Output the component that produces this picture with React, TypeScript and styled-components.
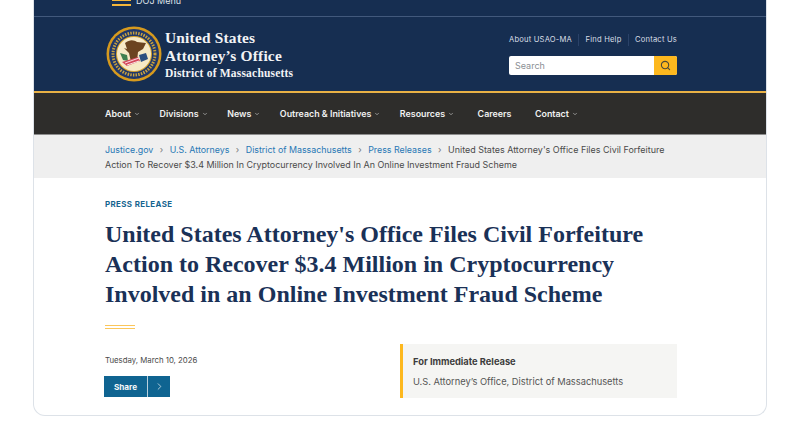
import styled, { createGlobalStyle } from "styled-components";
import { ChevronDown, ChevronRight, Search } from "lucide-react";

const GlobalStyle = createGlobalStyle`
    html, body {
        margin: 0;
        padding: 0;
        background: #fff;
        overflow: hidden;
    }
    body {
        font-family: Inter, "Liberation Sans", sans-serif;
    }
    * {
        box-sizing: border-box;
    }
`;

const Page = styled.div`
    width: 800px;
    height: 445px;
    padding: 0 33px 29px;
`;

const Frame = styled.div`
    height: 416px;
    background: #fff;
    border: 1px solid #dde2e8;
    border-top: 0;
    border-radius: 0 0 12px 12px;
    overflow: hidden;
`;

const TopBar = styled.div`
    height: 17px;
    background: #162e51;
    border-bottom: 1px solid #42597c;
    display: flex;
    align-items: flex-end;
    gap: 5px;
    padding: 0 0 10px 78px;
    color: #dfe3e9;
    font-size: 9px;
    line-height: 11px;
`;

const Burger = styled.span`
    width: 19px;
    height: 7px;
    border-top: 2px solid #f4b63a;
    border-bottom: 2px solid #f4b63a;
`;

const Masthead = styled.header`
    height: 76px;
    background: #162e51;
    border-bottom: 2px solid #e9b145;
    display: flex;
    justify-content: space-between;
    padding: 9px 89px 0 72px;
`;

const Brand = styled.div`
    display: flex;
    gap: 3px;
    height: 56px;
`;

const BrandText = styled.div`
    display: flex;
    flex-direction: column;
    padding-top: 3px;
    color: #f2f3f5;
    font-family: "Liberation Serif", serif;
    font-weight: 700;
`;

const BrandLine = styled.span`
    font-size: 15.4px;
    line-height: 18px;
    letter-spacing: 0.2px;
`;

const BrandDistrict = styled.span`
    font-size: 11.5px;
    line-height: 16px;
    letter-spacing: 0.2px;
`;

const Tools = styled.div`
    width: 168px;
    display: flex;
    flex-direction: column;
    gap: 10px;
    padding-top: 8px;
`;

const ToolLinks = styled.div`
    display: flex;
    justify-content: space-between;
    color: #d9dee6;
    font-size: 7.6px;
    line-height: 12px;
    letter-spacing: 0.2px;
`;

const ToolDivider = styled.span`
    width: 1px;
    background: #2a4268;
`;

const SearchBox = styled.div`
    height: 19px;
    display: flex;
    background: #fff;
    border-radius: 2px;
    overflow: hidden;
`;

const SearchHint = styled.span`
    flex: 1;
    padding-left: 6px;
    color: #8b8f94;
    font-size: 9px;
    line-height: 19px;
`;

const SearchButton = styled.span`
    width: 23px;
    background: #fdb81e;
    color: #4a4a3a;
    display: grid;
    place-items: center;
`;

const Nav = styled.nav`
    height: 42px;
    background: #2e2d2b;
    border-bottom: 1px solid #8d8d8d;
    display: flex;
    align-items: center;
    gap: 19.5px;
    padding-left: 71px;
`;

const NavItem = styled.span<{ $plain?: boolean }>`
    display: flex;
    align-items: center;
    gap: 3px;
    margin-left: ${(p) => (p.$plain ? "4px" : "0")};
    color: #f1f1f1;
    font-size: 8.9px;
    font-weight: 600;
    white-space: nowrap;
`;

const Crumbs = styled.div`
    height: 43px;
    background: #efefef;
    padding: 8px 80px 0 71px;
    color: #4a4a4a;
    font-size: 8.95px;
    line-height: 14.5px;
`;

const CrumbLink = styled.span`
    color: #2878b5;
    font-size: 8.85px;
`;

const CrumbSep = styled.span`
    color: #777;
    margin: 0 6.5px;
    font-size: 9px;
`;

const Content = styled.main`
    padding: 21px 89px 0 71px;
`;

const Eyebrow = styled.div`
    color: #15648f;
    font-size: 7.9px;
    font-weight: 700;
    line-height: 11px;
    letter-spacing: 0.4px;
`;

const Title = styled.h1`
    margin: 9px 0 0;
    color: #1a3157;
    font-family: "Liberation Serif", serif;
    font-size: 24px;
    font-weight: 700;
    line-height: 30px;
    letter-spacing: 0;
`;

const Rule = styled.div`
    width: 30px;
    height: 4px;
    margin-top: 16px;
    border-top: 1px solid #fbc65a;
    border-bottom: 1px solid #fbc65a;
`;

const MetaRow = styled.div`
    margin-top: 15px;
    display: flex;
    justify-content: space-between;
`;

const MetaLeft = styled.div`
    display: flex;
    flex-direction: column;
    gap: 10px;
    padding-top: 11px;
`;

const DateText = styled.div`
    color: #4a4a4a;
    font-size: 7.8px;
    line-height: 11px;
`;

const ShareButton = styled.div`
    width: 66px;
    height: 21px;
    margin-left: -1px;
    display: flex;
    background: #0f6491;
    color: #f4f7f9;
    font-size: 8.2px;
    font-weight: 700;
`;

const ShareLabel = styled.span`
    width: 44px;
    border-right: 1px solid #b9d0dd;
    display: grid;
    place-items: center;
`;

const ShareIcon = styled.span`
    flex: 1;
    display: grid;
    place-items: center;
`;

const ReleaseCard = styled.aside`
    width: 277px;
    height: 54px;
    background: #f5f5f3;
    border-left: 3px solid #fdb81e;
    padding: 12px 0 0 10px;
`;

const ReleaseTitle = styled.div`
    color: #3d3d3d;
    font-size: 9.3px;
    font-weight: 700;
    line-height: 12px;
`;

const ReleaseText = styled.div`
    margin-top: 8px;
    color: #555;
    font-size: 9.3px;
    line-height: 12px;
`;

function Seal() {
    return (
        <svg width="56" height="56" viewBox="0 0 56 56" aria-hidden="true">
            <circle cx="28" cy="28" r="27.5" fill="#d69a1e" />
            <circle cx="28" cy="28" r="25" fill="#20386a" />
            <circle cx="28" cy="28" r="21" fill="none" stroke="#c9a23f" strokeWidth="3" strokeDasharray="1.5 1.2" />
            <circle cx="28" cy="28" r="18" fill="#d8a52e" />
            <circle cx="28" cy="28" r="17" fill="#f6e9c6" />
            <path d="M19 17c5-4 9-3 12-1l9 1-3 6-5 3-1 9-6 1-2-9-5-5 3 1z" fill="#6b4420" />
            <path d="M14 27l7 2 1 6-5-1z" fill="#3f7f4f" />
            <path d="M16 36l16-5 2 4-13 5z" fill="#d5495c" />
            <path d="M19 37l14-5M21 39l12-4" stroke="#fff" strokeWidth="0.8" />
            <path d="M33 29l7-2 2 6-7 3z" fill="#2c4f80" />
        </svg>
    );
}

const navItems = [
    { label: "About", menu: true },
    { label: "Divisions", menu: true },
    { label: "News", menu: true },
    { label: "Outreach & Initiatives", menu: true },
    { label: "Resources", menu: true },
    { label: "Careers", menu: false, plain: true },
    { label: "Contact", menu: true, plain: true },
];

const crumbs = ["Justice.gov", "U.S. Attorneys", "District of Massachusetts", "Press Releases"];

export default function App() {
    return (
        <Page>
            <GlobalStyle />
            <Frame>
                <TopBar>
                    <Burger />
                    DOJ Menu
                </TopBar>
                <Masthead>
                    <Brand>
                        <Seal />
                        <BrandText>
                            <BrandLine>United States</BrandLine>
                            <BrandLine>Attorney’s Office</BrandLine>
                            <BrandDistrict>District of Massachusetts</BrandDistrict>
                        </BrandText>
                    </Brand>
                    <Tools>
                        <ToolLinks>
                            <span>About USAO-MA</span>
                            <ToolDivider />
                            <span>Find Help</span>
                            <ToolDivider />
                            <span>Contact Us</span>
                        </ToolLinks>
                        <SearchBox>
                            <SearchHint>Search</SearchHint>
                            <SearchButton>
                                <Search size={11} strokeWidth={2.4} />
                            </SearchButton>
                        </SearchBox>
                    </Tools>
                </Masthead>
                <Nav>
                    {navItems.map((item) => (
                        <NavItem key={item.label} $plain={item.plain}>
                            {item.label}
                            {item.menu && <ChevronDown size={6} strokeWidth={2} />}
                        </NavItem>
                    ))}
                </Nav>
                <Crumbs>
                    {crumbs.map((crumb) => (
                        <span key={crumb}>
                            <CrumbLink>{crumb}</CrumbLink>
                            <CrumbSep>›</CrumbSep>
                        </span>
                    ))}
                    United States Attorney's Office Files Civil Forfeiture Action To Recover $3.4 Million In
                    Cryptocurrency Involved In An Online Investment Fraud Scheme
                </Crumbs>
                <Content>
                    <Eyebrow>PRESS RELEASE</Eyebrow>
                    <Title>
                        United States Attorney's Office Files Civil Forfeiture Action to Recover $3.4 Million in
                        Cryptocurrency Involved in an Online Investment Fraud Scheme
                    </Title>
                    <Rule />
                    <MetaRow>
                        <MetaLeft>
                            <DateText>Tuesday, March 10, 2026</DateText>
                            <ShareButton>
                                <ShareLabel>Share</ShareLabel>
                                <ShareIcon>
                                    <ChevronRight size={11} strokeWidth={1.5} />
                                </ShareIcon>
                            </ShareButton>
                        </MetaLeft>
                        <ReleaseCard>
                            <ReleaseTitle>For Immediate Release</ReleaseTitle>
                            <ReleaseText>U.S. Attorney’s Office, District of Massachusetts</ReleaseText>
                        </ReleaseCard>
                    </MetaRow>
                </Content>
            </Frame>
        </Page>
    );
}
